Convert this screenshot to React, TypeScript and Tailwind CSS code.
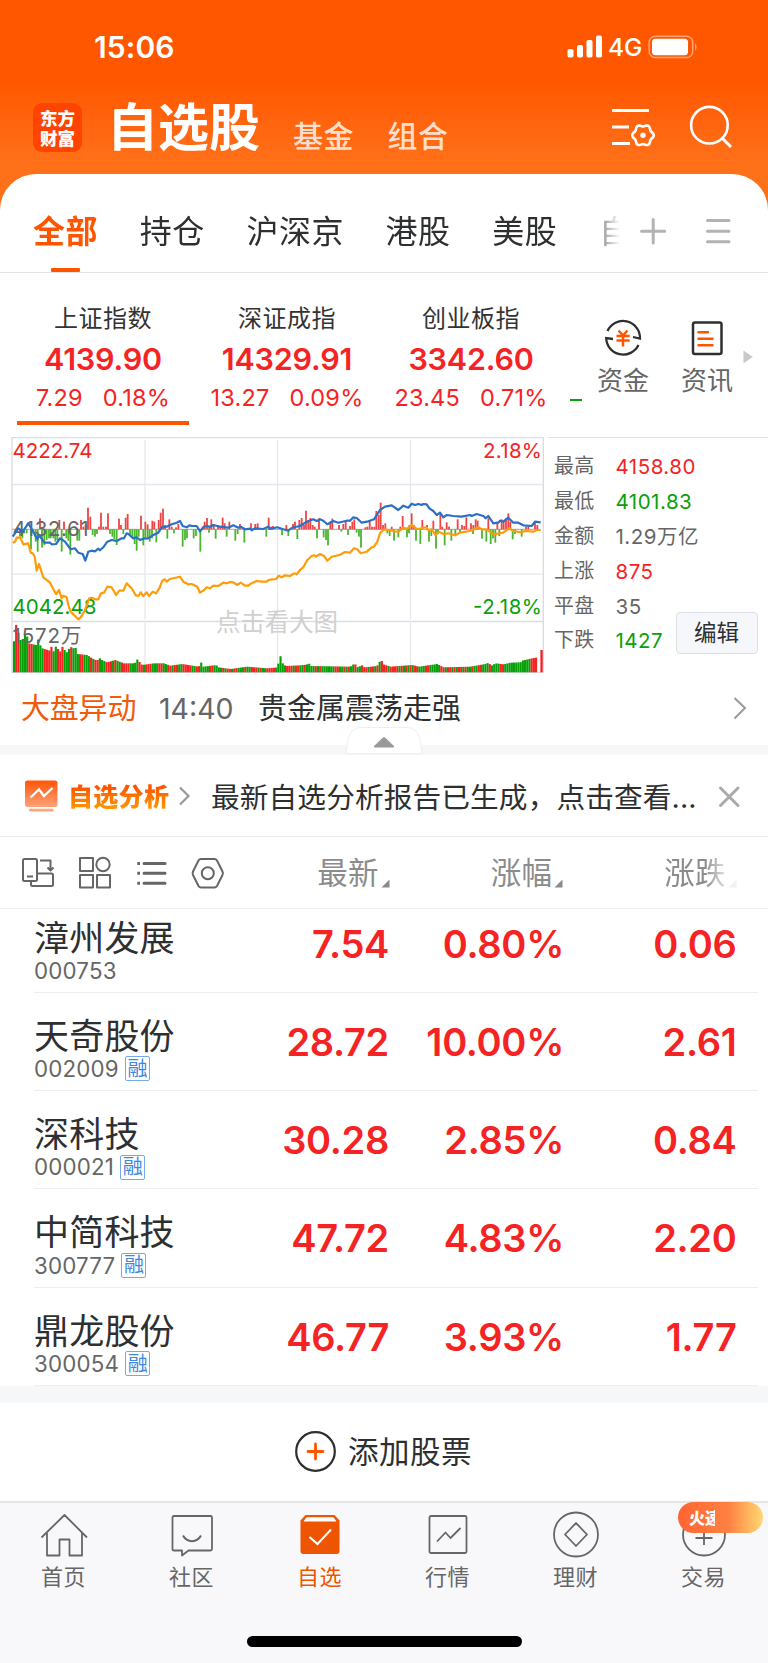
import type { ReactNode } from 'react';

type Pt = [number, number];

const X1 = (p: Pt): Pt => [p[0] / 3, p[1] / 3 - 7];
const X2 = (p: Pt): Pt => [p[0] / 3 + 270, p[1] / 3 - 7];

const blueA: Pt[] = [[38,320],[55,295],[68,305],[85,280],[100,305],[112,328],[118,316],[133,338],[150,338],[155,343],[168,342],[180,325],[195,335],[205,348],[212,358],[225,355],[235,368],[248,372],[256,392],[265,365],[275,362],[285,364],[295,356],[300,361],[310,352],[322,335],[335,330],[350,333],[365,325],[372,325],[380,310],[385,312],[400,325],[410,322],[420,330],[430,326],[445,325],[460,315],[475,308],[485,292],[500,290],[515,283],[530,278],[540,273],[548,288],[560,292],[568,286],[578,288],[590,288],[600,304],[612,290],[622,288],[630,290],[640,285],[660,290],[685,293],[700,286],[715,293],[722,290],[735,298],[750,296],[755,301],[765,295],[790,297],[805,290]];
const blueB: Pt[] = [[0,297],[22,292],[40,298],[55,302],[65,294],[75,291],[90,288],[110,275],[130,268],[140,273],[150,268],[160,272],[172,283],[190,273],[205,278],[230,272],[240,272],[250,262],[260,264],[275,278],[295,274],[312,268],[330,240],[345,230],[365,226],[385,240],[400,227],[415,233],[425,221],[435,225],[445,222],[455,225],[460,222],[470,223],[478,235],[490,243],[500,255],[510,248],[520,262],[530,255],[550,258],[575,260],[600,255],[605,258],[620,252],[640,258],[647,265],[655,258],[670,280],[685,278],[690,272],[700,275],[715,263],[730,278],[745,278],[760,286],[785,288],[795,275],[812,277]];
const orangeA: Pt[] = [[38,338],[45,335],[50,323],[60,322],[70,343],[85,340],[92,368],[98,370],[104,380],[110,422],[117,402],[130,442],[150,458],[168,492],[177,480],[185,505],[190,497],[200,502],[205,525],[212,545],[225,558],[229,562],[236,568],[245,558],[255,540],[268,505],[275,503],[285,508],[295,508],[303,490],[312,488],[322,470],[335,472],[348,495],[358,482],[370,482],[380,460],[385,465],[395,475],[408,497],[416,497],[422,487],[430,498],[440,487],[447,498],[458,485],[468,490],[478,475],[487,452],[495,448],[500,455],[510,447],[540,440],[550,455],[565,463],[575,462],[592,470],[600,488],[612,480],[620,472],[630,475],[640,467],[655,468],[670,458],[680,460],[690,456],[700,457],[712,465],[722,458],[735,467],[745,467],[752,461],[770,453],[785,455],[800,455],[805,451]];
const orangeB: Pt[] = [[0,449],[18,447],[26,437],[35,442],[45,436],[60,438],[72,430],[80,433],[92,418],[100,412],[112,390],[125,378],[133,376],[138,380],[150,372],[162,378],[172,392],[185,380],[210,374],[225,366],[240,368],[252,355],[262,358],[272,370],[290,365],[305,352],[312,350],[322,335],[330,310],[342,298],[355,300],[385,306],[400,293],[412,296],[427,285],[440,297],[455,295],[468,292],[475,300],[485,298],[497,316],[507,305],[520,312],[535,310],[555,316],[570,308],[600,303],[625,292],[635,298],[650,298],[670,313],[700,308],[717,295],[730,303],[755,307],[765,303],[790,305],[800,300],[812,300]];

const bars1: Pt[] = [[120,265],[178,270],[192,275],[243,270],[250,290],[257,285],[264,233],[271,260],[297,290],[303,248],[310,290],[318,290],[324,250],[357,266],[363,285],[377,263],[383,252],[423,257],[436,275],[443,283],[457,272],[463,275],[476,270],[482,248],[489,236],[495,285],[508,268],[515,290],[528,292],[535,282],[608,290],[614,275],[621,264],[628,290],[634,268],[641,282],[654,285],[661,288],[668,263],[674,280],[688,275],[720,282],[753,280],[766,282],[773,280],[806,263],[813,290],
[60,320],[67,325],[72,310],[80,310],[93,358],[100,310],[107,335],[113,365],[126,353],[133,345],[140,330],[147,325],[152,325],[160,325],[166,335],[172,330],[185,365],[199,325],[205,332],[211,374],[232,332],[238,332],[278,315],[285,320],[291,312],[330,312],[337,320],[343,328],[350,345],[370,312],[390,315],[397,323],[404,342],[410,362],[416,320],[430,346],[436,325],[443,325],[449,335],[456,325],[469,337],[502,326],[522,310],[548,350],[555,330],[561,325],[581,325],[588,318],[601,365],[627,308],[647,326],[680,320],[706,332],[713,312],[733,338],[799,320]];
const bars2: Pt[] = [[9,288],[49,285],[69,282],[75,275],[88,270],[95,264],[102,285],[108,242],[115,270],[121,264],[128,285],[134,290],[147,265],[181,275],[187,266],[207,285],[220,282],[227,272],[240,288],[247,275],[253,268],[286,292],[292,290],[299,272],[306,290],[313,290],[319,243],[326,255],[332,218],[339,285],[346,280],[365,290],[391,290],[398,258],[418,285],[425,250],[431,285],[457,270],[471,285],[490,272],[511,250],[517,290],[530,277],[537,290],[563,268],[576,285],[583,288],[589,262],[603,280],[610,285],[617,268],[623,272],[655,265],[682,275],[695,268],[701,275],[708,265],[715,250],[721,275],[768,290],[775,285],[795,275],[802,285],
[36,315],[55,318],[82,327],[141,325],[161,322],[168,330],[174,346],[214,305],[234,315],[260,308],[267,320],[273,353],[352,310],[359,318],[372,332],[385,322],[411,322],[417,310],[438,332],[451,342],[477,335],[484,318],[498,356],[504,312],[524,346],[544,332],[556,318],[570,310],[609,312],[636,326],[649,335],[662,342],[669,325],[676,338],[688,318],[728,328],[735,312],[755,320]];

const volKeys: Pt[] = [...([[38,665],[45,578],[52,600],[58,630],[66,630],[72,612],[79,615],[85,640],[107,645],[113,628],[119,645],[126,655],[148,662],[153,650],[160,665],[166,650],[180,665],[187,648],[197,670],[210,650],[218,655],[225,652],[232,672],[260,675],[275,685],[290,692],[297,684],[304,690],[320,697],[345,690],[370,700],[403,700],[410,688],[418,697],[425,705],[460,700],[490,700],[510,707],[545,702],[595,710],[601,695],[608,710],[640,706],[648,706],[654,712],[690,717],[740,710],[800,715],[832,712],[838,670]] as Pt[]).map(X1), ...([[35,698],[45,708],[90,706],[108,704],[115,700],[122,708],[240,710],[253,700],[260,712],[275,706],[282,712],[320,708],[332,688],[339,703],[360,710],[425,705],[445,710],[480,705],[500,702],[520,712],[600,710],[645,702],[655,698],[662,708],[675,700],[700,703],[720,698],[750,697],[755,692],[785,685],[797,683],[803,722]] as Pt[]).map(X2)];

const volColors =
  'grrggggrrgggggrrrrggrrrgggrgggrrgggrgrrgggrrrgrggrrrrggggrrgrrrgggrrggrrgrrggrrrrggrrggggrrggggrgrrgrrgggrggrrrgrggrrrrgggggrrrgrrggrggggrgrggggggrrggrgrggrggrrrgrrgrgrrrgrrrrgrgrgrgrrgggrrgggggrrgrrgrgrrgrggrggrrgggrggggrrggggggggggggrrr';

function lerp(keys: Pt[], x: number) {
  for (let i = 1; i < keys.length; i++) {
    if (x <= keys[i][0]) {
      const [a, b] = [keys[i - 1], keys[i]];
      return a[1] + ((b[1] - a[1]) * Math.max(0, x - a[0])) / (b[0] - a[0]);
    }
  }
  return keys[keys.length - 1][1];
}

const toPoints = (p: Pt[]) => p.map((q) => q[0].toFixed(1) + ',' + q[1].toFixed(1)).join(' ');

const gear: Pt[] = Array.from({ length: 72 }, (_, i) => {
  const a = (i * Math.PI) / 36;
  const r = 9.8 + 1 * Math.cos(6 * a);
  return [32 + r * Math.cos(a), 29.3 + r * Math.sin(a)];
});

const LATIN = 'font-[Inter,"Noto_Sans_CJK_SC",sans-serif]';

function Chart() {
  const blue = [...blueA.map(X1), ...blueB.map(X2)];
  const orange = [...orangeA.map(X1), ...orangeB.map(X2)];
  const macd = [...bars1.map(X1), ...bars2.map(X2)];
  const base = 235.3;
  const zero = 92.3;
  return (
    <svg width="548" height="236" viewBox="0 0 548 236" className="block shrink-0">
      <g stroke="#e6e8ef" strokeWidth="1.3">
        <path d="M12 47.5H543M12 137.2H543M145 3V182M277.5 3V182M410.5 3V182M145 186V235M277.5 186V235M410.5 186V235" fill="none" />
        <path d="M12 .7H543M12 184.5H543" stroke="#dcdde1" />
        <path d="M12 0V236M543.3 0V236M12 235.5H543" stroke="#d9dbe1" />
        <path d="M12 92.3H540" stroke="#a5a5a5" strokeWidth="1" />
      </g>
      <text x="216" y="193.5" fontSize="24.5" fill="#d0d0d0" textLength="122" className={LATIN}>点击看大图</text>
      <g>
        {volColors.split('').map((c, i) => {
          const x = 12.9 + i * 2.203;
          if (x > 538) return null;
          const y = lerp(volKeys, x + 0.6);
          return <rect key={i} x={x} y={y} width="2.15" height={base - y} fill={c === 'r' ? '#f52323' : '#08a008'} />;
        })}
        <rect x="540.4" y="213" width="2.3" height="22.3" fill="#f02020" />
      </g>
      <g>
        {macd.map(([x, y], i) => (
          <rect key={i} x={x - 0.9} y={Math.min(y, zero)} width="1.8" height={Math.abs(y - zero)} fill={y < zero ? '#ee4444' : '#4cb52f'} />
        ))}
      </g>
      <g fontSize="20.5" className={LATIN}>
        <text x="12.5" y="21" fill="#f52323" textLength="80">4222.74</text>
        <text x="542" y="21" fill="#f52323" textAnchor="end" textLength="59">2.18%</text>
        <text x="12.5" y="98.5" fill="#666" textLength="76">4132.61</text>
        <text x="12.5" y="176.500" fill="#0aa00a" textLength="84">4042.48</text>
        <text x="542" y="176.5" fill="#0aa00a" textAnchor="end" textLength="69">-2.18%</text>
        <text x="12.5" y="205.5" fill="#666" textLength="69">1572万</text>
      </g>
      <polyline points={toPoints(orange)} fill="none" stroke="#ff9c0a" strokeWidth="2.2" strokeLinejoin="round" />
      <polyline points={toPoints(blue)} fill="none" stroke="#2a6fc8" strokeWidth="2.2" strokeLinejoin="round" />
    </svg>
  );
}

function StatusBar() {
  return (
    <div className="flex h-[94px] items-center justify-between pl-[94px] pr-[70px]">
      <span className="-mt-[1px] text-[30px] leading-none font-semibold tracking-[0.1px]">15:06</span>
      <div className="flex items-center">
        <svg width="36" height="24" viewBox="0 0 36 24" fill="#fff">
          <rect x="0.5" y="14" width="6" height="8.5" rx="1.8" />
          <rect x="10" y="10" width="6" height="12.5" rx="1.8" />
          <rect x="19.5" y="5" width="6" height="17.5" rx="1.8" />
          <rect x="29" y="0.5" width="6" height="22" rx="1.8" />
        </svg>
        <span className="ml-[5px] w-[34px] text-[24.5px] leading-none font-medium">4G</span>
        <svg width="50" height="24" viewBox="0 0 50 24" className="ml-[6px]">
          <rect x="1.2" y="1.2" width="43.5" height="21.4" rx="6" fill="none" stroke="#ffa477" strokeWidth="1.5" />
          <rect x="4" y="3.7" width="36" height="16.5" rx="3.5" fill="#fff" />
          <path d="M47 8.5c2 1 2 6 0 7z" fill="#ffa477" />
        </svg>
      </div>
    </div>
  );
}

function Header() {
  return (
    <header className="h-[213px] shrink-0 bg-linear-to-b from-[#ff5700] from-[38%] to-[#ff7119] to-[78%] text-white">
      <StatusBar />
      <div className="flex h-[79px] pl-[33px]">
        <div className="mt-[9px] flex h-[49px] w-[49px] flex-col items-center justify-center rounded-[9px] bg-[#ff4400] font-['Noto_Sans_CJK_SC',sans-serif] text-[17.5px] leading-[20px] font-black">
          东方
          <br />
          财富
        </div>
        <h1 className="mt-[4px] ml-[25px] w-[156px] text-[51px] leading-[60px] font-bold whitespace-nowrap">自选股</h1>
        <span className="mt-[25px] ml-[30px] w-[64px] text-[30px] leading-[34px] font-medium tracking-[0.5px] whitespace-nowrap text-[#ffdfcc]">基金</span>
        <span className="mt-[25px] ml-[30.5px] w-[64.5px] text-[30px] leading-[34px] font-medium tracking-[0.5px] whitespace-nowrap text-[#ffdfcc]">组合</span>
        <svg className="mt-[12px] ml-[159px]" width="46" height="44" viewBox="0 0 46 44" fill="none" stroke="#fff" strokeWidth="3">
          <path d="M1 4.6H38M1 21H18M1 37.5H19" />
          <polygon points={toPoints(gear)} strokeWidth="2.6" strokeLinejoin="round" />
          <circle cx="32" cy="29.3" r="2.7" fill="#fff" stroke="none" />
        </svg>
        <svg className="mt-[10px] ml-[31px]" width="46" height="46" viewBox="0 0 46 46" fill="none" stroke="#fff" strokeWidth="2.6">
          <circle cx="21.4" cy="21.2" r="18.3" />
          <path d="M33.5 33.5 43 43" strokeWidth="3" />
        </svg>
      </div>
    </header>
  );
}

function Tabs() {
  return (
    <nav className="-mt-[39.5px] flex h-[99.5px] shrink-0 rounded-t-[36px] border-b border-[#e3e3e3] bg-white pl-[33px] text-[32px] leading-[40px] tracking-[0.5px] text-[#2e2f31]">
      <div className="flex w-[587px] gap-[41.7px] overflow-hidden whitespace-nowrap [mask-image:linear-gradient(to_right,black_94%,transparent)]">
        <div className="flex shrink-0 flex-col items-center pt-[38.5px] font-bold text-[#ff5500]">
          全部
          <span className="mt-auto h-[4px] w-[29px] rounded-[1px] bg-[#ff5500]" />
        </div>
        {['持仓', '沪深京', '港股', '美股', '自选'].map((t) => (
          <span key={t} className="shrink-0 pt-[38.5px]">{t}</span>
        ))}
      </div>
      <svg className="mt-[43.5px] ml-[19px]" width="30" height="30" viewBox="0 0 30 30" stroke="#b3b3b3" strokeWidth="3" strokeLinecap="round">
        <path d="M2.5 14.2H25.7M14.2 2.5V26" />
      </svg>
      <svg className="mt-[43.5px] ml-[35px]" width="30" height="30" viewBox="0 0 30 30" stroke="#b3b3b3" strokeWidth="3" strokeLinecap="round">
        <path d="M3.5 3.5H25M3.5 14.2H25M3.5 24.8H25" />
      </svg>
    </nav>
  );
}

const indices = [
  ['上证指数', '4139.90', '7.29', '0.18%'],
  ['深证成指', '14329.91', '13.27', '0.09%'],
  ['创业板指', '3342.60', '23.45', '0.71%'],
];

function Indices() {
  return (
    <section className="flex h-[164px] shrink-0 pl-[11px]">
      {indices.map(([name, value, diff, pct], i) => (
        <div key={name} className="flex w-[184px] flex-col items-center text-[#f52323]">
          <span className="mt-[31px] text-[24px] leading-[30px] tracking-[0.5px] text-[#333]">{name}</span>
          <span className="mt-[7px] text-[30.5px] leading-[36px] font-semibold tracking-[-0.2px]">{value}</span>
          <span className="mt-[6px] flex gap-[20px] text-[23.5px] leading-[30px] tracking-[0.2px]">
            <span>{diff}</span>
            <span>{pct}</span>
          </span>
          {i === 0 && <span className="mt-[8px] h-[4px] w-[172px] bg-[#ff5500]" />}
        </div>
      ))}
      <span className="mt-[126px] ml-[7px] h-[2px] w-[12px] bg-[#0aa00a]" />
      <div className="ml-[6px] flex w-[70px] flex-col items-center">
        <svg className="mt-[45px]" width="40" height="40" viewBox="0 0 40 40" fill="none" stroke="#2e2f31" strokeWidth="2.3">
          <path d="M4.5 13 A17 17 0 0 1 37 20.5 L30 19M35.5 27 A17 17 0 0 1 3.2 20 L10 21" />
          <path d="M15.5 12.5 20 17.5 24.5 12.5M13.5 18H26.7M13.5 22.6H26.7M20 17.5V28.5" stroke="#ff5500" strokeWidth="2.5" />
        </svg>
        <span className="mt-[8px] text-[26px] leading-[30px] text-[#666]">资金</span>
      </div>
      <div className="ml-[14px] flex w-[70px] flex-col items-center">
        <svg className="mt-[45px]" width="40" height="40" viewBox="0 0 40 40" fill="none" stroke="#2e2f31" strokeWidth="2.5">
          <rect x="6" y="4.5" width="28.5" height="31.5" rx="2" />
          <path d="M11.5 14.3H21M11.5 20.8H25.5M11.5 27.3H25.5" stroke="#ff5500" strokeLinecap="round" />
        </svg>
        <span className="mt-[8px] text-[26px] leading-[30px] text-[#666]">资讯</span>
      </div>
      <svg className="mt-[77px]" width="12" height="14" viewBox="0 0 12 14"><path d="M1.5 0.5 10.8 7 1.5 13.3Z" fill="#c8c8c8" /></svg>
    </section>
  );
}

const stats: [string, string, string][] = [
  ['最高', '4158.80', 'text-[#f52323]'],
  ['最低', '4101.83', 'text-[#0aa00a]'],
  ['金额', '1.29万亿', 'text-[#666]'],
  ['上涨', '875', 'text-[#f52323]'],
  ['平盘', '35', 'text-[#666]'],
  ['下跌', '1427', 'text-[#0aa00a]'],
];

function Market() {
  return (
    <section className="relative flex h-[236px] shrink-0">
      <Chart />
      <div className="flex flex-1 flex-col border-t border-[#e3e3e3] pt-[11px] pl-[6px] text-[20px] leading-[35px] text-[#666]">
        {stats.map(([k, v, c]) => (
          <div key={k} className="flex h-[34.9px]">
            <span className="w-[61.5px] tracking-[0.3px]">{k}</span>
            <span className={c + ' text-[20.5px] tracking-[0.5px]'}>{v}</span>
          </div>
        ))}
      </div>
      <button className="absolute top-[174.5px] left-[675.5px] h-[42px] w-[82px] rounded-[4px] border border-[#dde0e5] bg-[#f6f7fa] text-[22.5px] leading-[36px] text-[#2e2f31]">编辑</button>
    </section>
  );
}

function News() {
  return (
    <section className="relative flex h-[82px] shrink-0 items-start border-b-[10px] border-[#f6f7f9] pl-[21px] text-[29px] leading-[40px] whitespace-nowrap">
      <span className="mt-[16px] w-[138px] tracking-[-0.2px] text-[#f05a0a]">大盘异动</span>
      <span className="mt-[16px] w-[99px] text-[28.5px] text-[#666]">14:40</span>
      <span className="mt-[16px] text-[#2e2f31]">贵金属震荡走强</span>
      <svg className="mt-[22px] mr-[21px] ml-auto" width="14" height="26" viewBox="0 0 14 26" fill="none" stroke="#999" strokeWidth="2"><path d="M1.5 3 12 13 1.5 23.5" /></svg>
      <svg className="absolute top-[53px] left-[343px]" width="82" height="29" viewBox="0 0 82 29">
        <path d="M2.5 27.5 5.5 12Q8 1.5 18 1.5H64Q74 1.5 76.5 12L79.5 27.5Z" fill="#fff" stroke="#eeeff2" />
        <path d="M31 20 40 11.5Q41 11 42 11.5L51 20Q51.5 21.5 50 21.5H32Q30.5 21.5 31 20Z" fill="#999" />
      </svg>
    </section>
  );
}

function Analysis() {
  return (
    <section className="flex h-[82px] shrink-0 items-center border-b border-[#ebebeb] pl-[24px] whitespace-nowrap">
      <svg width="35" height="34" viewBox="0 0 35 34">
        <defs>
          <linearGradient id="panel" x1="0" y1="0" x2="0" y2="1"><stop offset="0" stopColor="#ff5505" /><stop offset="1" stopColor="#ffa27a" /></linearGradient>
        </defs>
        <rect x="1" y="1.5" width="32.5" height="26.5" rx="2.5" fill="url(#panel)" />
        <rect x="5" y="29.8" width="24.5" height="2.6" rx="1.2" fill="#ffa67e" />
        <path d="M6.5 18.5 15 10.5 20 17 28.5 9" fill="none" stroke="#fff" strokeWidth="2.2" />
      </svg>
      <span className="mt-[2px] ml-[9px] w-[102px] bg-linear-to-b from-[#ff5500] from-[25%] to-[#ff9500] to-[80%] bg-clip-text text-[25px] leading-[38px] font-black tracking-[0.3px] text-transparent">自选分析</span>
      <svg className="ml-[8px]" width="14" height="22" viewBox="0 0 14 22" fill="none" stroke="#999" strokeWidth="2.2"><path d="M2 2.5 10.5 11 2 19.5" /></svg>
      <span className="mt-[4px] ml-[19px] w-[488px] text-[28.7px] leading-[38px] tracking-[0.1px] text-[#2e2f31]">最新自选分析报告已生成，点击查看...</span>
      <svg className="mt-[2px] ml-[18px]" width="24" height="24" viewBox="0 0 24 24" fill="none" stroke="#aaa" strokeWidth="3" strokeLinecap="round"><path d="M3.5 3 21 20.5M21 3 3.5 20.5" /></svg>
    </section>
  );
}

function ColumnHead({ label, fade }: { label: string; fade?: boolean }) {
  return (
    <div className={fade ? 'flex items-end [mask-image:linear-gradient(to_right,black_55%,rgba(0,0,0,0.12)_90%)]' : 'flex items-end'}>
      <span>{label}</span>
      <svg className="mb-[8px] ml-[1.5px]" width="9" height="9" viewBox="0 0 9 9"><path d="M8.5 .5V8.5H.5Z" fill="#8a8a90" /></svg>
    </div>
  );
}

function TableHead() {
  return (
    <section className="flex h-[72px] shrink-0 items-center border-b border-[#f0f0f0] pr-[31.5px] pl-[22px] text-[30.5px] leading-[46px] tracking-[0.4px] text-[#8c8c8c]">
      <svg width="204" height="34" viewBox="0 0 204 34" fill="none" stroke="#666" strokeWidth="2" strokeLinejoin="round">
        <rect x="1" y="3" width="14" height="22" rx="1.5" />
        <path d="M5 20.5H11M18 4.5H28.5V13M25.5 11.5 28.5 14.5 31.5 11.5M15 17.5H29.5Q31 17.5 31 19V28.5Q31 30 29.5 30H10.5Q9 30 9 28.5V25" />
        <rect x="58" y="2" width="13" height="13" />
        <circle cx="81" cy="8.5" r="6.7" />
        <rect x="58" y="19" width="13" height="12.5" />
        <rect x="75" y="19" width="13" height="12.5" />
        <path d="M122 7.5H143M122 17.3H143M122 27.3H143" strokeWidth="3" strokeLinecap="round" />
        <path d="M115.3 7.5H118M115.3 17.3H118M115.3 27.3H118" strokeWidth="3" />
        <path d="M179 3H192.5Q194 3 195 4.5L200.5 15.5Q201.5 17.3 200.5 19L195 30Q194 31.5 192.5 31.5H179Q177.5 31.5 176.5 30L171 19Q170.2 17.3 171 15.5L176.5 4.5Q177.5 3 179 3Z" />
        <circle cx="185.8" cy="17.3" r="6" />
      </svg>
      <div className="ml-auto flex gap-[101.2px]">
        <ColumnHead label="最新" />
        <ColumnHead label="涨幅" />
        <ColumnHead label="涨跌" fade />
      </div>
    </section>
  );
}

const rows: [string, string, boolean, string, string, string][] = [
  ['漳州发展', '000753', false, '7.54', '0.80%', '0.06'],
  ['天奇股份', '002009', true, '28.72', '10.00%', '2.61'],
  ['深科技', '000021', true, '30.28', '2.85%', '0.84'],
  ['中简科技', '300777', true, '47.72', '4.83%', '2.20'],
  ['鼎龙股份', '300054', true, '46.77', '3.93%', '1.77'],
];

function Stocks() {
  return (
    <section className="flex h-[477px] shrink-0 flex-col justify-end overflow-hidden pr-[10px] pl-[34px]">
      {rows.map(([name, code, margin, price, pct, diff]) => (
        <div key={code} className="flex h-[98.3px] shrink-0 border-b border-[#efefef]">
          <div className="w-[160px] pt-[21px] whitespace-nowrap">
            <div className="text-[35px] leading-[44px] tracking-[0.2px] text-[#2e2f31]">{name}</div>
            <div className="flex h-[22px] items-center text-[22.3px] tracking-[0.2px] text-[#666]">
              {code}
              {margin && <span className="ml-[6px] flex h-[25px] w-[25px] items-center justify-center rounded-[2px] border-[1.5px] border-[#74aaea] text-[20px] leading-none tracking-normal text-[#3f87dd]">融</span>}
            </div>
          </div>
          <div className="flex flex-1 pt-[26px] text-right text-[38px] leading-[46px] font-semibold tracking-[-0.3px] text-[#f52323]">
            <span className="w-[195px]">{price}</span>
            <span className="w-[175px]">{pct}</span>
            <span className="w-[172.5px]">{diff}</span>
          </div>
        </div>
      ))}
    </section>
  );
}

function NavItem({ label, active, children }: { label: string; active?: boolean; children: ReactNode }) {
  return (
    <div className={active ? 'flex w-[128px] flex-col items-center text-[#ee5500]' : 'flex w-[128px] flex-col items-center text-[#666]'}>
      <svg className="mt-[7px]" width="48" height="48" viewBox="0 0 48 48" fill="none" stroke="currentColor" strokeWidth="1.8" strokeLinejoin="round">
        {children}
      </svg>
      <span className="mt-[4px] text-[22px] leading-[30px] tracking-[0.5px]">{label}</span>
    </div>
  );
}

function BottomNav() {
  return (
    <nav className="relative -ml-[0.5px] flex h-[162px] w-[769px] shrink-0 border-t-2 border-[#e6e6ea] bg-[#f8f8fb]">
      <NavItem label="首页">
        <path d="M1.5 27.5 24.5 5 47 27.5M7 23V45.5H19.5V29.5H29.5V45.5H42V23" />
      </NavItem>
      <NavItem label="社区">
        <path d="M6 6H42.5Q44 6 44 7.5V39Q44 40.5 42.5 40.5H20.5L14 45.5V40.5H6Q4.5 40.5 4.5 39V7.5Q4.5 6 6 6Z" />
        <path d="M15 25.5C19 33 29 33 33 25.5" strokeWidth="2" />
      </NavItem>
      <NavItem label="自选" active>
        <path d="M9.5 5H38.5L43.5 10.5V41Q43.5 44 40.5 44H7.5Q4.5 44 4.5 41V10.5Z" fill="currentColor" stroke="none" />
        <path d="M10.5 7.3H37.5L40.5 11.5H7.5Z" fill="#fff" stroke="none" />
        <path d="M13.5 27 21.5 34 35 19.5" stroke="#fff" strokeWidth="2" strokeLinejoin="miter" />
      </NavItem>
      <NavItem label="行情">
        <rect x="5.5" y="6" width="37" height="37" rx="1.5" />
        <path d="M13 31.5 21.5 22.5 26.5 28 36.5 18" />
      </NavItem>
      <NavItem label="理财">
        <circle cx="24" cy="24.5" r="22" />
        <path d="M24 13 35 24.5 24 36 13 24.5Z" />
      </NavItem>
      <NavItem label="交易">
        <circle cx="24" cy="24.5" r="21" />
        <path d="M24 16V35M15.5 28H32.5" />
      </NavItem>
      <div className="absolute -top-[1px] left-[678.5px] flex h-[31px] w-[85px] items-center rounded-full bg-linear-to-r from-[#ff6433] via-[#ff8142] via-60% to-[#ffd873] pl-[11px] text-[16px] leading-none font-black text-white">
        火
        <span className="w-[10px] overflow-hidden text-[16px]">速</span>
      </div>
      <div className="absolute top-[133px] left-[247.5px] h-[11px] w-[275px] rounded-full bg-black" />
    </nav>
  );
}

export default function App() {
  return (
    <div className={'flex h-[1663px] w-[768px] flex-col overflow-hidden bg-white ' + LATIN}>
      <Header />
      <Tabs />
      <Indices />
      <Market />
      <News />
      <Analysis />
      <TableHead />
      <Stocks />
      <section className="flex h-[115px] shrink-0 items-center border-t-[17px] border-[#f6f7f9] pl-[295px]">
        <svg width="42" height="42" viewBox="0 0 42 42" fill="none" strokeWidth="2.2">
          <circle cx="20.5" cy="20.5" r="19.3" stroke="#2e2f31" />
          <path d="M13 20.5H28M20.5 13V28" stroke="#ff5500" strokeWidth="2.8" strokeLinecap="round" />
        </svg>
        <span className="ml-[11px] text-[30.5px] leading-[40px] tracking-[0.5px] text-[#2e2f31]">添加股票</span>
      </section>
      <BottomNav />
    </div>
  );
}
